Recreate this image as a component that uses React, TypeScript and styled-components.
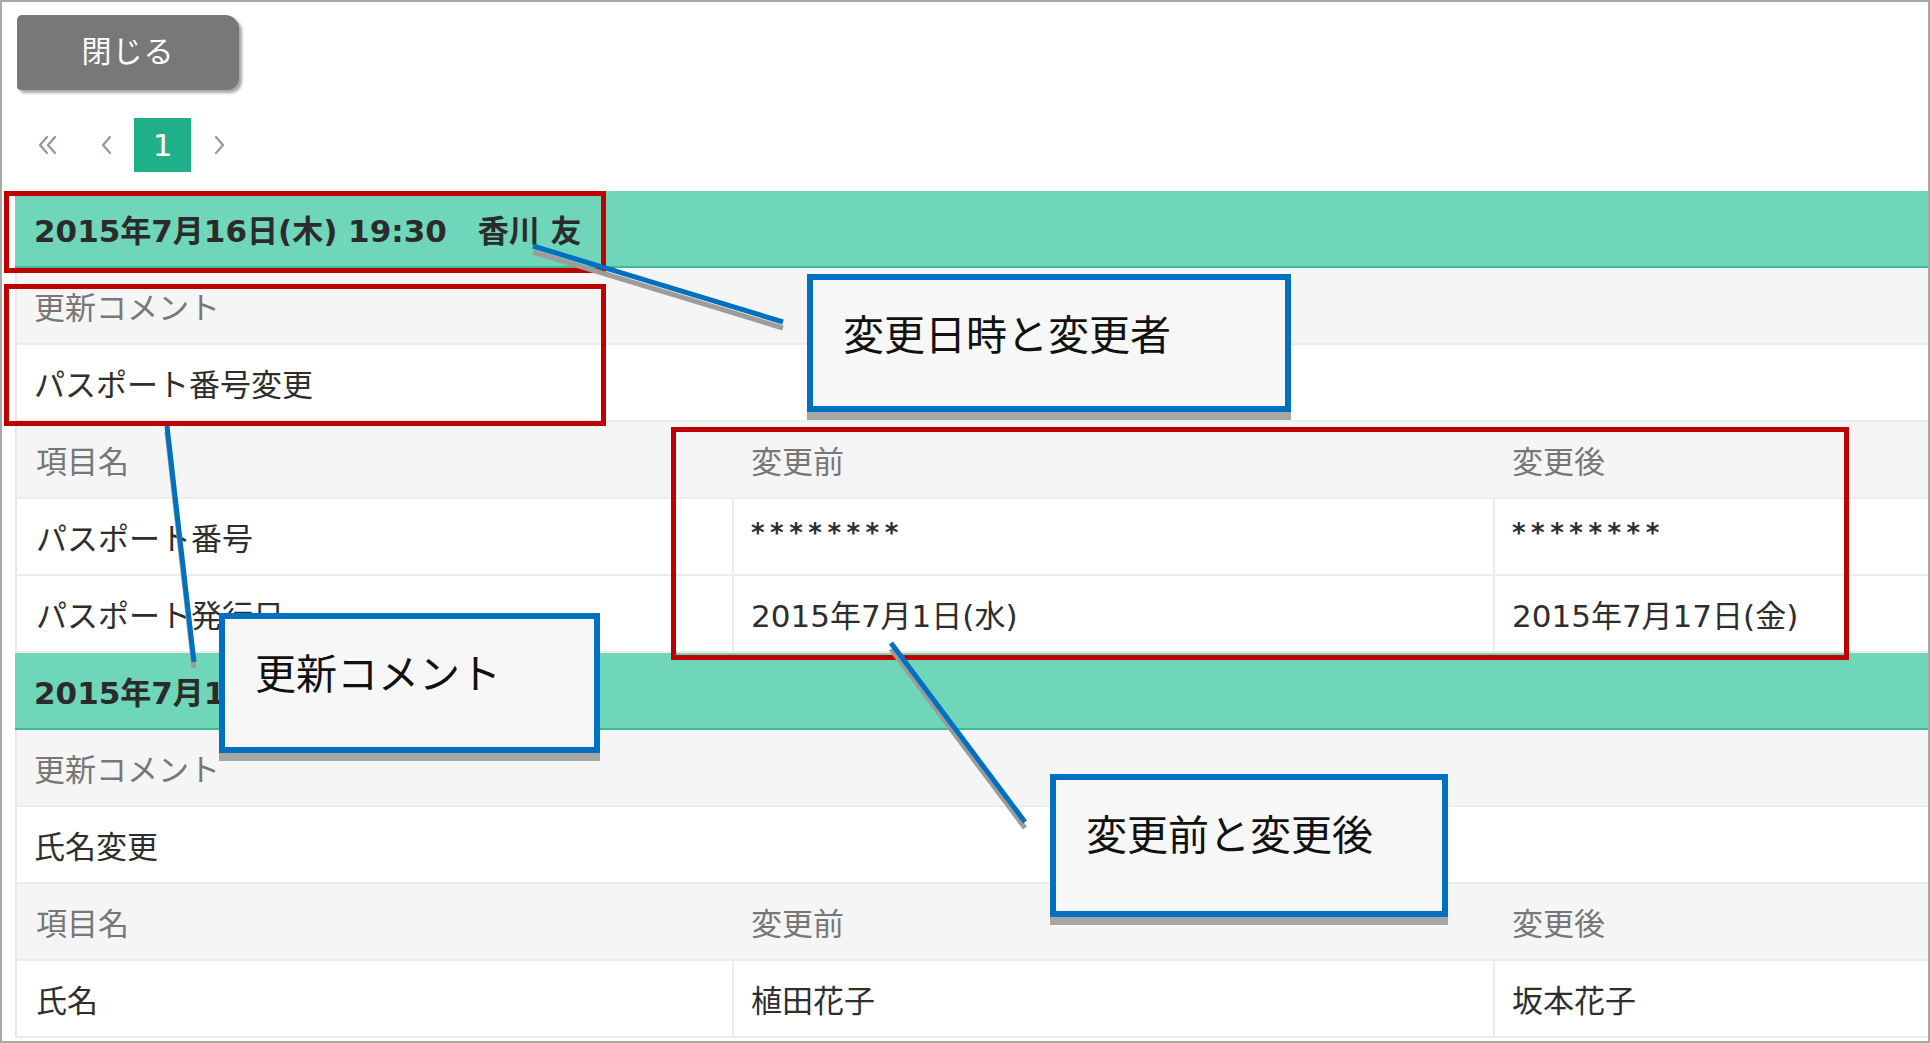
import React from 'react';
import styled, { createGlobalStyle } from 'styled-components';

const Global = createGlobalStyle`
  html, body { margin: 0; padding: 0; background: #fff; }
  body { font-family: "DejaVu Sans", "Noto Sans CJK JP", "Noto Sans", sans-serif; }
`;

const Frame = styled.div`
  position: relative;
  box-sizing: border-box;
  width: 1930px;
  height: 1043px;
  border: 2px solid #a8a8a8;
  background: #fff;
  overflow: hidden;
  padding: 13px 0 0 13px;
  display: flex;
  flex-direction: column;
`;

const CloseButton = styled.button`
  width: 222px;
  height: 75px;
  margin-left: 2px;
  padding: 0 0 7px 0;
  background: #787878;
  color: #fff;
  border: none;
  border-radius: 5px 14px 12px 4px;
  box-shadow: 3px 3px 3px rgba(0, 0, 0, 0.35);
  font-family: inherit;
  font-size: 30px;
  letter-spacing: 1px;
  display: flex;
  align-items: center;
  justify-content: center;
`;

const Pager = styled.div`
  display: flex;
  align-items: center;
  height: 54px;
  margin-top: 28px;
  padding-left: 11px;
`;

const PageLink = styled.span<{ $ml?: number }>`
  width: 44px;
  height: 54px;
  margin-left: ${p => p.$ml ?? 0}px;
  display: flex;
  align-items: center;
  justify-content: center;
`;

const PageCurrent = styled.span<{ $ml?: number }>`
  width: 57px;
  height: 54px;
  margin-left: ${p => p.$ml ?? 0}px;
  background: #1fb089;
  color: #fff;
  font-size: 31px;
  display: flex;
  align-items: center;
  justify-content: center;
`;

const Table = styled.div`
  margin-top: 19px;
  display: flex;
  flex-direction: column;
`;

const GroupHeader = styled.div`
  box-sizing: border-box;
  height: 77px;
  background: #6fd6b9;
  border-bottom: 2px solid #3dbb91;
  padding-left: 19px;
  display: flex;
  align-items: center;
  font-size: 31px;
  font-weight: 700;
  color: #2b2b2b;
  white-space: pre;
`;

const Row = styled.div<{ $shade?: boolean }>`
  box-sizing: border-box;
  height: 77px;
  background: ${p => (p.$shade ? '#f5f5f5' : '#fff')};
  border-left: 2px solid #e8e8e8;
  border-bottom: 2px solid #ececec;
  display: grid;
  grid-template-columns: 715px 761px 1fr;
`;

const FullCell = styled.div<{ $muted?: boolean }>`
  grid-column: 1 / -1;
  padding-left: 17px;
  display: flex;
  align-items: center;
  font-size: 31px;
  color: ${p => (p.$muted ? '#777' : '#2e2e2e')};
`;

const Cell = styled.div<{ $muted?: boolean; $sep?: boolean }>`
  padding-left: 17px;
  display: flex;
  align-items: center;
  font-size: 31px;
  color: ${p => (p.$muted ? '#777' : '#2e2e2e')};
  border-left: ${p => (p.$sep ? '2px solid #ececec' : '2px solid transparent')};
`;

const Stars = styled.span`
  font-size: 26px;
  font-weight: 700;
  letter-spacing: 5.5px;
  margin-top: -8px;
`;

/* annotation layer */
const Overlay = styled.div`
  position: absolute;
  left: -2px;
  top: -2px;
  width: 1930px;
  height: 1043px;
  pointer-events: none;
`;

const LinesSvg = styled.svg`
  position: absolute;
  left: 0;
  top: 0;
`;

const RedBox = styled.div<{ $x: number; $y: number; $w: number; $h: number }>`
  position: absolute;
  box-sizing: border-box;
  left: ${p => p.$x}px;
  top: ${p => p.$y}px;
  width: ${p => p.$w}px;
  height: ${p => p.$h}px;
  border: 5px solid #c00000;
`;

const Callout = styled.div<{ $x: number; $y: number; $w: number; $h: number }>`
  position: absolute;
  box-sizing: border-box;
  left: ${p => p.$x}px;
  top: ${p => p.$y}px;
  width: ${p => p.$w}px;
  height: ${p => p.$h}px;
  border: 6px solid #0070c0;
  background: #f7f7f7;
  box-shadow: 0 8px 0 0 #a6a6a6;
  padding: 28px 0 0 30px;
  font-family: "Noto Sans CJK JP", sans-serif;
  font-size: 41px;
  line-height: 48px;
  color: #111;
  white-space: nowrap;
`;

const Chevron = ({ d }: { d: string }) => (
  <svg width="24" height="26" viewBox="0 0 24 26">
    <path d={d} fill="none" stroke="#8a98a8" strokeWidth="2.2" strokeLinecap="round" strokeLinejoin="round" />
  </svg>
);

const lines = [
  { x1: 533, y1: 246, x2: 783, y2: 322 },
  { x1: 167, y1: 426, x2: 194, y2: 662 },
  { x1: 891, y1: 643, x2: 1025, y2: 822 },
];

export default function App() {
  return (
    <>
      <Global />
      <Frame>
        <CloseButton>閉じる</CloseButton>
        <Pager>
          <PageLink>
            <Chevron d="M11 5 L4 13 L11 21 M19 5 L12 13 L19 21" />
          </PageLink>
          <PageLink $ml={15}>
            <Chevron d="M15 5 L8 13 L15 21" />
          </PageLink>
          <PageCurrent $ml={5}>1</PageCurrent>
          <PageLink $ml={6}>
            <Chevron d="M9 5 L16 13 L9 21" />
          </PageLink>
        </Pager>
        <Table>
          <GroupHeader>{'2015年7月16日(木) 19:30　香川 友'}</GroupHeader>
          <Row $shade>
            <FullCell $muted>更新コメント</FullCell>
          </Row>
          <Row>
            <FullCell>パスポート番号変更</FullCell>
          </Row>
          <Row $shade>
            <Cell $muted>項目名</Cell>
            <Cell $muted>変更前</Cell>
            <Cell $muted>変更後</Cell>
          </Row>
          <Row>
            <Cell>パスポート番号</Cell>
            <Cell $sep><Stars>********</Stars></Cell>
            <Cell $sep><Stars>********</Stars></Cell>
          </Row>
          <Row>
            <Cell>パスポート発行日</Cell>
            <Cell $sep>2015年7月1日(水)</Cell>
            <Cell $sep>2015年7月17日(金)</Cell>
          </Row>
          <GroupHeader>{'2015年7月15日(水) 10:00　香川 友'}</GroupHeader>
          <Row $shade>
            <FullCell $muted>更新コメント</FullCell>
          </Row>
          <Row>
            <FullCell>氏名変更</FullCell>
          </Row>
          <Row $shade>
            <Cell $muted>項目名</Cell>
            <Cell $muted>変更前</Cell>
            <Cell $muted>変更後</Cell>
          </Row>
          <Row>
            <Cell>氏名</Cell>
            <Cell $sep>植田花子</Cell>
            <Cell $sep>坂本花子</Cell>
          </Row>
        </Table>

        <Overlay>
          <RedBox $x={4} $y={191} $w={602} $h={82} />
          <RedBox $x={4} $y={284} $w={602} $h={142} />
          <RedBox $x={671} $y={427} $w={1178} $h={233} />
          <LinesSvg width="1930" height="1043" viewBox="0 0 1930 1043">
            {lines.map((l, i) => (
              <line key={'s' + i} x1={l.x1} y1={l.y1 + 6} x2={l.x2} y2={l.y2 + 6} stroke="#9c9c9c" strokeWidth="5" />
            ))}
            {lines.map((l, i) => (
              <line key={'l' + i} x1={l.x1} y1={l.y1} x2={l.x2} y2={l.y2} stroke="#0070c0" strokeWidth="5" />
            ))}
          </LinesSvg>
          <Callout $x={807} $y={274} $w={484} $h={138}>変更日時と変更者</Callout>
          <Callout $x={219} $y={613} $w={381} $h={140}>更新コメント</Callout>
          <Callout $x={1050} $y={774} $w={398} $h={143}>変更前と変更後</Callout>
        </Overlay>
      </Frame>
    </>
  );
}
